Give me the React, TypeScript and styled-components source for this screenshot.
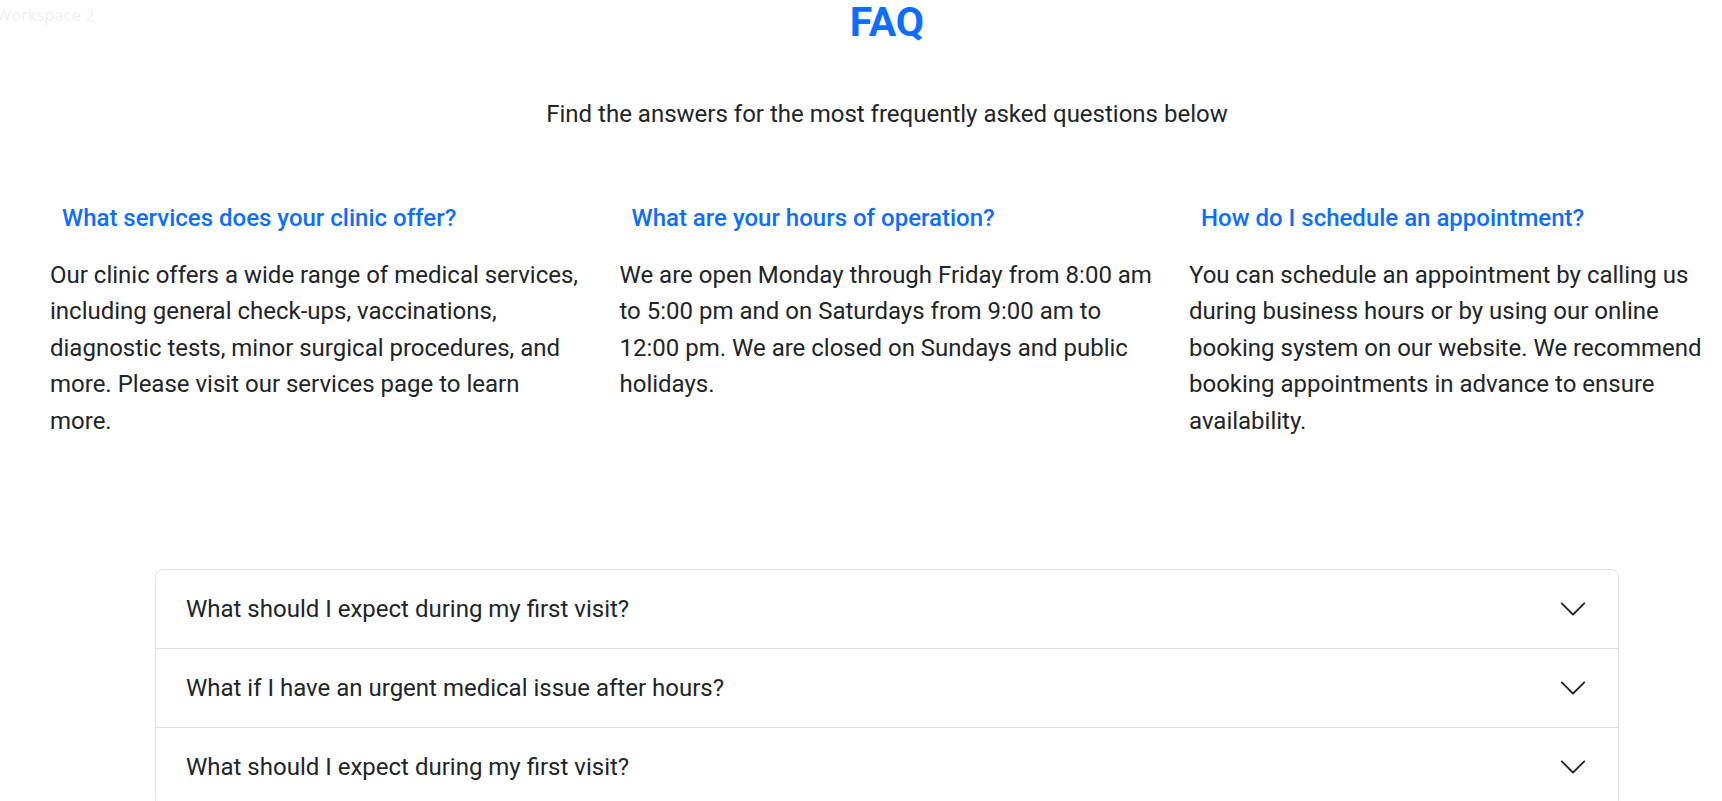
import React from "react";
import styled, { createGlobalStyle } from "styled-components";

const GlobalStyle = createGlobalStyle`
  html, body {
    margin: 0;
    padding: 0;
    background: #ffffff;
    overflow-x: hidden;
  }
  body {
    font-family: Roboto, "Liberation Sans", Arial, sans-serif;
    color: #212529;
  }
  * { box-sizing: border-box; }
`;

const Page = styled.div`
  position: relative;
  width: 1774px;
  padding-bottom: 40px;
`;

const WorkspaceLabel = styled.div`
  position: absolute;
  top: 5px;
  left: -4px;
  font-family: "Open Sans", "Noto Sans", sans-serif;
  font-size: 16.5px;
  color: #f0f0f0;
  white-space: nowrap;
`;

const Title = styled.h1`
  margin: -2px 0 0;
  text-align: center;
  font-size: 41px;
  line-height: 48px;
  font-weight: 700;
  color: #0d6efd;
`;

const Subtitle = styled.p`
  margin: 50px 0 0;
  text-align: center;
  font-size: 24px;
  line-height: 36px;
  font-weight: 400;
`;

const Columns = styled.div`
  display: grid;
  grid-template-columns: repeat(3, 569.5px);
  margin: 71.5px 0 0 50px;
`;

const Column = styled.div`
  display: flex;
  flex-direction: column;
`;

const QuestionHeading = styled.h5`
  margin: 0 0 0 12px;
  font-size: 24px;
  line-height: 28.8px;
  font-weight: 500;
  color: #0d6efd;
`;

const Answer = styled.p`
  margin: 24.7px 0 0;
  width: 534px;
  font-size: 24px;
  line-height: 36.4px;
`;

const Accordion = styled.div`
  width: 1464px;
  margin: 130px auto 0;
  border: 1px solid #dee2e6;
  border-radius: 8px;
  overflow: hidden;
`;

const Item = styled.div`
  & + & {
    border-top: 1px solid #dee2e6;
  }
`;

const ItemButton = styled.button`
  display: flex;
  align-items: center;
  width: 100%;
  padding: 24px 30px;
  border: 0;
  background: #ffffff;
  font-family: inherit;
  font-size: 24px;
  line-height: 1.2;
  color: #212529;
  text-align: left;
  cursor: pointer;
`;

const Chevron = styled.svg`
  flex-shrink: 0;
  width: 30px;
  height: 30px;
  margin-left: auto;
  color: #212529;
`;

const columns = [
  {
    q: "What services does your clinic offer?",
    a: "Our clinic offers a wide range of medical services, including general check-ups, vaccinations, diagnostic tests, minor surgical procedures, and more. Please visit our services page to learn more.",
  },
  {
    q: "What are your hours of operation?",
    a: "We are open Monday through Friday from 8:00 am to 5:00 pm and on Saturdays from 9:00 am to 12:00 pm. We are closed on Sundays and public holidays.",
  },
  {
    q: "How do I schedule an appointment?",
    a: "You can schedule an appointment by calling us during business hours or by using our online booking system on our website. We recommend booking appointments in advance to ensure availability.",
  },
];

const accordionItems = [
  "What should I expect during my first visit?",
  "What if I have an urgent medical issue after hours?",
  "What should I expect during my first visit?",
];

const ChevronIcon = () => (
  <Chevron viewBox="0 0 16 16" aria-hidden="true">
    <path
      fill="currentColor"
      fillRule="evenodd"
      d="M1.646 4.646a.5.5 0 0 1 .708 0L8 10.293l5.646-5.647a.5.5 0 0 1 .708.708l-6 6a.5.5 0 0 1-.708 0l-6-6a.5.5 0 0 1 0-.708z"
    />
  </Chevron>
);

export default function App() {
  return (
    <>
      <GlobalStyle />
      <Page>
        <WorkspaceLabel>Workspace 2</WorkspaceLabel>
        <Title>FAQ</Title>
        <Subtitle>Find the answers for the most frequently asked questions below</Subtitle>
        <Columns>
          {columns.map((c) => (
            <Column key={c.q}>
              <QuestionHeading>{c.q}</QuestionHeading>
              <Answer>{c.a}</Answer>
            </Column>
          ))}
        </Columns>
        <Accordion>
          {accordionItems.map((t, i) => (
            <Item key={i}>
              <ItemButton type="button">
                <span>{t}</span>
                <ChevronIcon />
              </ItemButton>
            </Item>
          ))}
        </Accordion>
      </Page>
    </>
  );
}
